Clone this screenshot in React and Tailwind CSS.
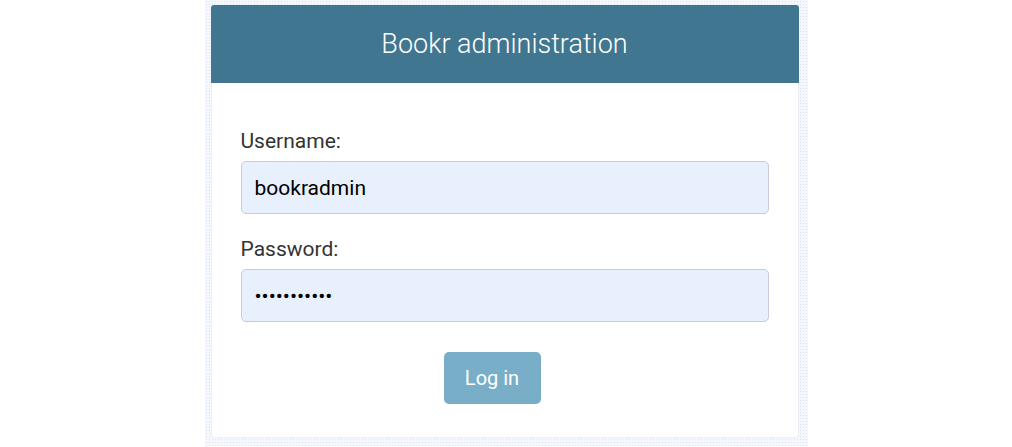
import React from 'react';

const fieldClass =
  'block w-full h-[53px] px-[13px] rounded-[5px] border border-[#c8ccd4] bg-[#e8f0fe] text-[21px] text-black outline-none';

export default function App() {
  return (
    <div className="min-h-[447px] bg-white font-['Roboto','Liberation_Sans',sans-serif]">
      {/* faint dotted backdrop around the card */}
      <div className="mx-auto w-[603px] pt-[5px] pl-[6px] pr-[9px] pb-[8px] bg-[#f4f7fc] bg-[radial-gradient(circle,#dbe5f6_0.8px,transparent_1px)] bg-[length:3px_3px]">
        <div className="w-[588px] bg-white rounded-[4px] border border-[#ecf0f6]">
          {/* Header */}
          <div className="h-[78px] bg-[#417690] rounded-t-[3px] flex items-center justify-center -mx-px -mt-px">
            <h1 className="text-white text-[27px] font-light">Bookr administration</h1>
          </div>

          {/* Form */}
          <form className="px-[29px] pt-[38px] pb-[33px]">
            <div>
              <label className="block h-[40px] leading-[40px] text-[21px] text-[#333]">Username:</label>
              <input className={fieldClass} defaultValue="bookradmin" readOnly />
            </div>
            <div className="mt-[15px]">
              <label className="block h-[40px] leading-[40px] text-[21px] text-[#333]">Password:</label>
              <input type="password" className={fieldClass} defaultValue="bookradmin1" readOnly />
            </div>
            <div className="mt-[30px] pl-[203px]">
              <button
                type="button"
                className="w-[97px] h-[52px] rounded-[5px] bg-[#79aec8] text-white text-[20px]"
              >
                Log in
              </button>
            </div>
          </form>
        </div>
      </div>
    </div>
  );
}
